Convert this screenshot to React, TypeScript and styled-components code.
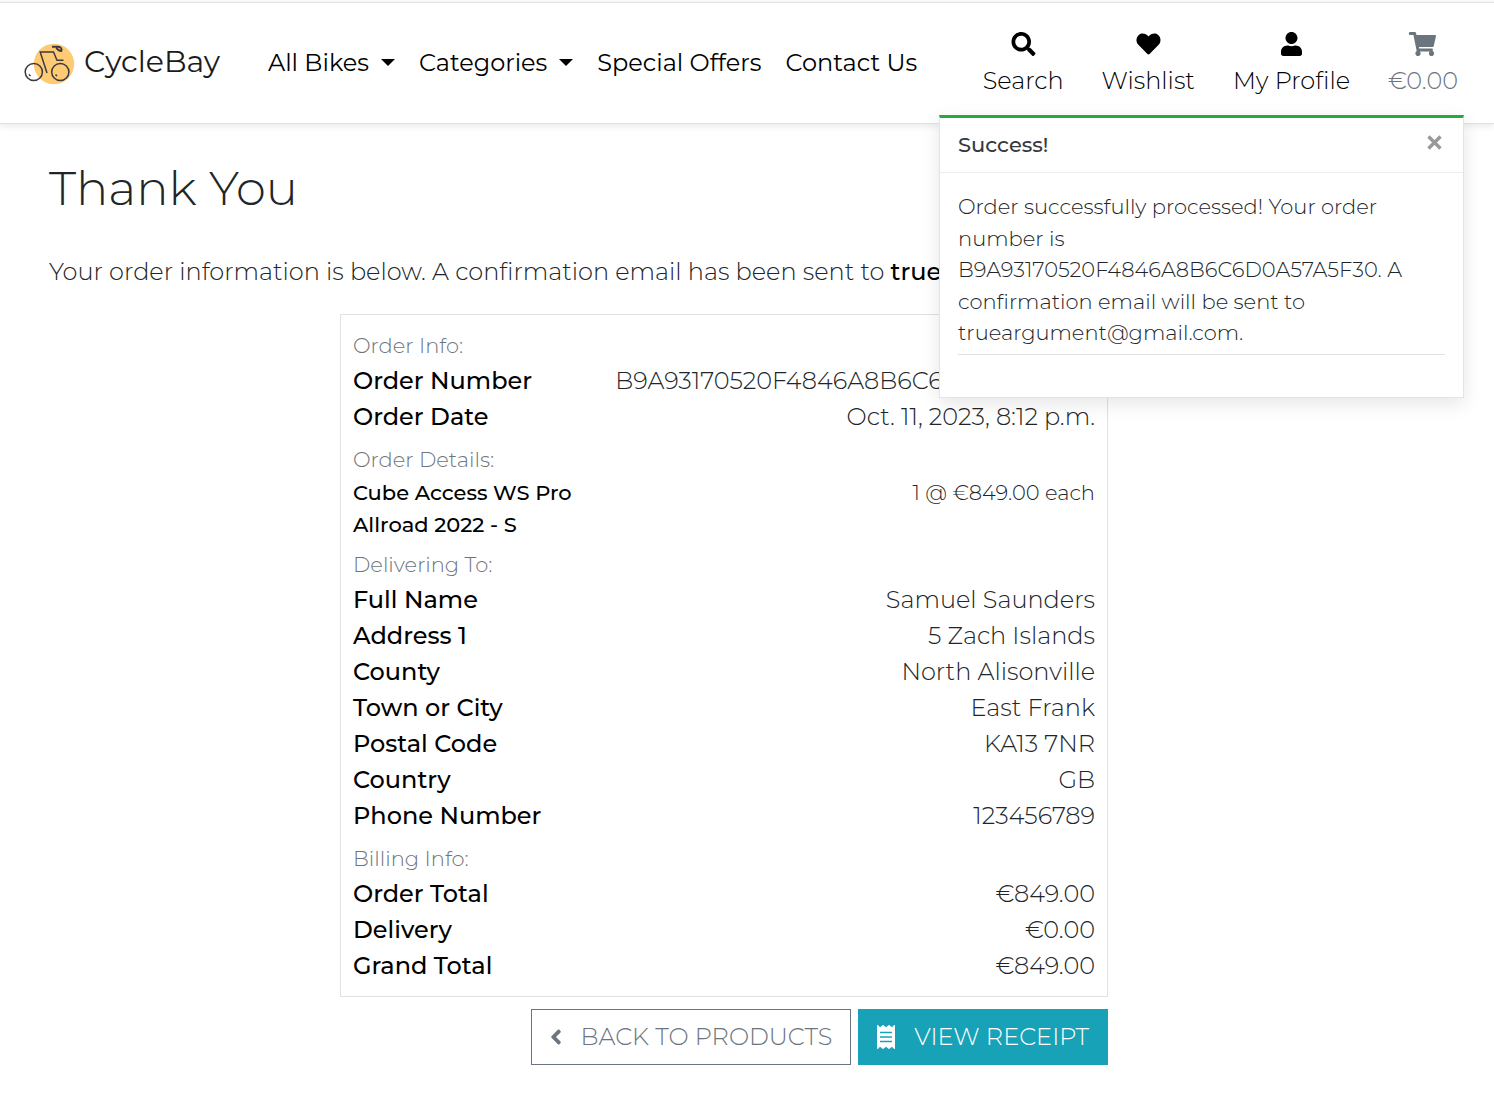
import React, { useState } from "react";
import styled, { createGlobalStyle } from "styled-components";
import {
  FaSearch,
  FaHeart,
  FaUser,
  FaShoppingCart,
  FaAngleLeft,
  FaReceipt,
} from "react-icons/fa";

const GlobalStyle = createGlobalStyle`
  *, *::before, *::after { box-sizing: border-box; }
  body {
    margin: 0;
    background: #fff;
    color: #212529;
    font-family: Montserrat, Inter, "Liberation Sans", sans-serif;
    font-size: 24px;
    font-weight: 300;
    line-height: 1.5;
  }
  a { color: inherit; text-decoration: none; }
  h1, p, dl, dd, dt, ul { margin: 0; padding: 0; }
  button { font: inherit; cursor: pointer; }
`;

const Header = styled.header`
  position: relative;
  display: flex;
  align-items: center;
  height: 124px;
  padding: 0 36px 0 24px;
  border-top: 2px solid #f8f8f8;
  border-bottom: 1px solid #dee2e6;
  box-shadow: inset 0 1px 0 #dee2e6, 0 3px 6px rgba(0, 0, 0, 0.08);
`;

const Brand = styled.a`
  display: flex;
  align-items: flex-start;
  gap: 9px;
  margin-right: 48px;
  color: #1b1b1b;
  font-size: 30px;
  font-weight: 400;
  line-height: 42px;
`;

const LogoMark = styled.svg`
  width: 51px;
  height: 42px;
  margin-top: 2px;
`;

const Nav = styled.nav`
  display: flex;
  gap: 24px;
  color: #000;
  font-weight: 400;
`;

const MenuButton = styled.button`
  display: flex;
  align-items: center;
  gap: 12px;
  padding: 0;
  border: 0;
  background: none;
  color: inherit;

  &::after {
    content: "";
    border: 7px solid transparent;
    border-top-color: currentColor;
    border-bottom: 0;
  }
`;

const Actions = styled.ul`
  display: flex;
  gap: 38px;
  margin-left: auto;
  list-style: none;
`;

const Action = styled.a<{ $muted?: boolean }>`
  display: flex;
  flex-direction: column;
  align-items: center;
  color: ${(p) => (p.$muted ? "#6c757d" : "#000")};

  svg {
    width: 27px;
    height: 24px;
    margin: 5px 0 7px;
  }
`;

const Toast = styled.section`
  position: absolute;
  top: 113px;
  right: 30px;
  z-index: 2;
  width: 525px;
  border: 1px solid rgba(0, 0, 0, 0.1);
  border-top: 3px solid #28a745;
  background: #fff;
  box-shadow: 0 6px 18px rgba(0, 0, 0, 0.1);
  font-size: 21px;
`;

const ToastHeader = styled.div`
  display: flex;
  align-items: center;
  justify-content: space-between;
  height: 55px;
  padding: 0 18px;
  border-bottom: 1px solid #eee;
  color: #343a40;
  font-weight: 500;
`;

const Close = styled.button`
  display: flex;
  padding: 0 3px 6px;
  border: 0;
  background: none;
  color: #999;

  svg { width: 15px; height: 15px; }
`;

const ToastBody = styled.div`
  padding: 18px 18px 42px;

  p {
    padding-bottom: 5px;
    border-bottom: 1px solid #dee2e6;
  }
`;

const Main = styled.main`
  max-width: 1440px;
  margin: 0 auto;
  padding: 35px 22px 46px;
`;

const Title = styled.h1`
  margin-bottom: 37px;
  font-size: 48px;
  font-weight: 300;
  line-height: 58px;
`;

const Intro = styled.p`
  margin-bottom: 24px;

  strong { color: #000; font-weight: 500; }
`;

const Column = styled.div`
  padding-right: 46px;
`;

const Centered = styled.div`
  max-width: 768px;
  margin: 0 auto;
`;

const OrderBox = styled.section`
  padding: 12px;
  border: 1px solid #dee2e6;
`;

const Group = styled.div`
  & + & { margin-top: 6px; }
`;

const GroupLabel = styled.p`
  color: #6c757d;
  line-height: 35px;

  small { font-size: 21px; }
`;

const Row = styled.div<{ $small?: boolean }>`
  display: flex;
  justify-content: space-between;
  font-size: ${(p) => (p.$small ? "21px" : "24px")};

  dt {
    flex: 0 0 34%;
    color: #000;
    font-weight: 500;
    white-space: ${(p) => (p.$small ? "normal" : "nowrap")};
  }
  dd { text-align: right; white-space: nowrap; }
`;

const ButtonBar = styled.div`
  display: flex;
  justify-content: flex-end;
  gap: 7px;
  margin-top: 12px;
`;

const ButtonLink = styled.a<{ $solid?: boolean }>`
  display: flex;
  align-items: center;
  height: 56px;
  padding: 0 18px;
  border: 1px solid ${(p) => (p.$solid ? "#17a2b8" : "#6c757d")};
  background: ${(p) => (p.$solid ? "#17a2b8" : "#fff")};
  color: ${(p) => (p.$solid ? "#fff" : "#6c757d")};
  gap: 19px;
  white-space: nowrap;

  svg {
    width: ${(p) => (p.$solid ? "18px" : "12px")};
    height: 24px;
  }
`;

const groups = [
  {
    label: "Order Info:",
    rows: [
      ["Order Number", "B9A93170520F4846A8B6C6D0A57A5F30"],
      ["Order Date", "Oct. 11, 2023, 8:12 p.m."],
    ],
  },
  {
    label: "Order Details:",
    small: true,
    rows: [["Cube Access WS Pro Allroad 2022 - S", "1 @ €849.00 each"]],
  },
  {
    label: "Delivering To:",
    rows: [
      ["Full Name", "Samuel Saunders"],
      ["Address 1", "5 Zach Islands"],
      ["County", "North Alisonville"],
      ["Town or City", "East Frank"],
      ["Postal Code", "KA13 7NR"],
      ["Country", "GB"],
      ["Phone Number", "123456789"],
    ],
  },
  {
    label: "Billing Info:",
    rows: [
      ["Order Total", "€849.00"],
      ["Delivery", "€0.00"],
      ["Grand Total", "€849.00"],
    ],
  },
];

function Logo() {
  return (
    <LogoMark viewBox="9 7 51 42" aria-hidden="true">
      <circle cx="39" cy="28" r="20.2" fill="#ffca74" />
      <g fill="none" stroke="#3b3b40" strokeWidth="1.5">
        <circle cx="18.8" cy="36" r="8.6" />
        <circle cx="45.3" cy="36" r="8.6" />
        <path d="M32 37 25.2 16H38.5L42 24.3H48.5" />
        <path d="M14 38.5 15.5 40M40.5 38.5 42 40" />
        <path
          d="M37 10.8H43C46 11 47.3 13 46.3 15 44 15 42.5 13.8 41.3 11.8"
          strokeWidth="1.9"
        />
      </g>
    </LogoMark>
  );
}

export default function App() {
  const [toastOpen, setToastOpen] = useState(true);
  return (
    <>
      <GlobalStyle />
      <Header>
        <Brand href="#">
          <Logo />
          CycleBay
        </Brand>
        <Nav>
          <MenuButton type="button">All Bikes</MenuButton>
          <MenuButton type="button">Categories</MenuButton>
          <a href="#">Special Offers</a>
          <a href="#">Contact Us</a>
        </Nav>
        <Actions>
          <li><Action href="#"><FaSearch />Search</Action></li>
          <li><Action href="#"><FaHeart />Wishlist</Action></li>
          <li><Action href="#"><FaUser />My Profile</Action></li>
          <li><Action href="#" $muted><FaShoppingCart />€0.00</Action></li>
        </Actions>
        {toastOpen && (
          <Toast role="status">
            <ToastHeader>
              Success!
              <Close type="button" aria-label="Close" onClick={() => setToastOpen(false)}>
                <svg viewBox="0 0 15 15" stroke="currentColor" strokeWidth="3.4">
                  <path d="M1.5 1.5 13.5 13.5M13.5 1.5 1.5 13.5" />
                </svg>
              </Close>
            </ToastHeader>
            <ToastBody>
              <p>
                Order successfully processed! Your order number is
                {" "}B9A93170520F4846A8B6C6D0A57A5F30. A confirmation email will be
                sent to trueargument@gmail.com.
              </p>
            </ToastBody>
          </Toast>
        )}
      </Header>
      <Main>
        <Title>Thank You</Title>
        <Intro>
          Your order information is below. A confirmation email has been sent to{" "}
          <strong>trueargument@gmail.com</strong>.
        </Intro>
        <Column>
          <Centered>
            <OrderBox>
              {groups.map((g) => (
                <Group key={g.label}>
                  <GroupLabel><small>{g.label}</small></GroupLabel>
                  <dl>
                    {g.rows.map(([name, value]) => (
                      <Row key={name} $small={g.small}>
                        <dt>{name}</dt>
                        <dd>{value}</dd>
                      </Row>
                    ))}
                  </dl>
                </Group>
              ))}
            </OrderBox>
            <ButtonBar>
              <ButtonLink href="#"><FaAngleLeft />BACK TO PRODUCTS</ButtonLink>
              <ButtonLink href="#" $solid><FaReceipt />VIEW RECEIPT</ButtonLink>
            </ButtonBar>
          </Centered>
        </Column>
      </Main>
    </>
  );
}
